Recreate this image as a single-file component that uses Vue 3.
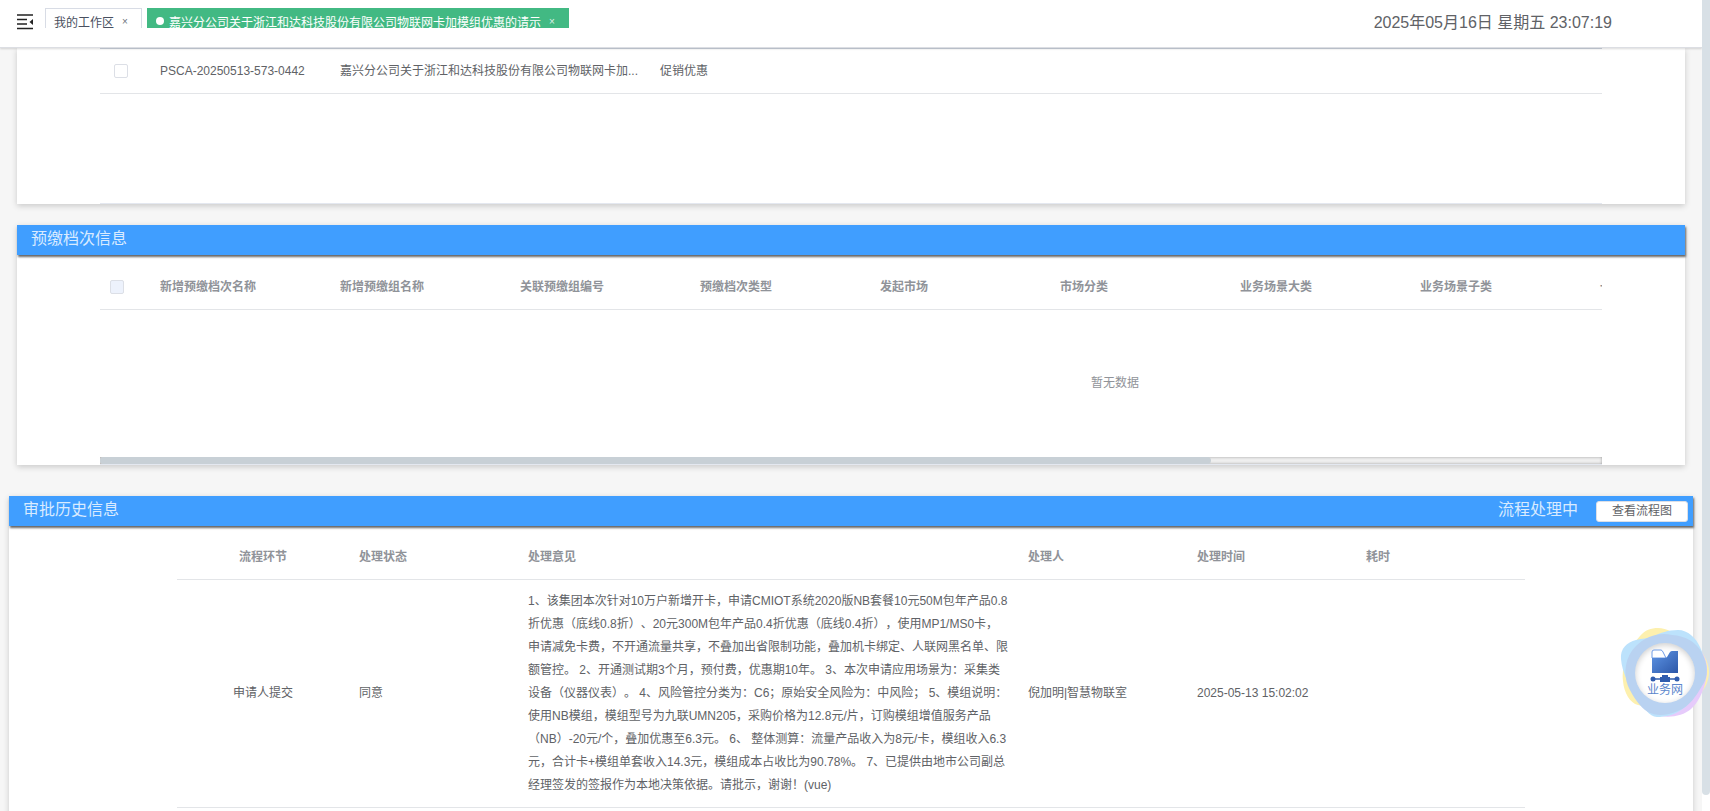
<script setup>
const clock = '2025年05月16日 星期五 23:07:19'

const tierColumns = [
  '新增预缴档次名称',
  '新增预缴组名称',
  '关联预缴组编号',
  '预缴档次类型',
  '发起市场',
  '市场分类',
  '业务场景大类',
  '业务场景子类',
  '一',
  '',
  ''
]

const opinion =
  '1、该集团本次针对10万户新增开卡，申请CMIOT系统2020版NB套餐10元50M包年产品0.8折优惠（底线0.8折）、20元300M包年产品0.4折优惠（底线0.4折），使用MP1/MS0卡，申请减免卡费，不开通流量共享，不叠加出省限制功能，叠加机卡绑定、人联网黑名单、限额管控。 2、开通测试期3个月，预付费，优惠期10年。 3、本次申请应用场景为：采集类设备（仪器仪表）。 4、风险管控分类为：C6；原始安全风险为：中风险； 5、模组说明：使用NB模组，模组型号为九联UMN205，采购价格为12.8元/片，订购模组增值服务产品（NB）-20元/个，叠加优惠至6.3元。 6、 整体测算：流量产品收入为8元/卡，模组收入6.3元，合计卡+模组单套收入14.3元，模组成本占收比为90.78%。 7、已提供由地市公司副总经理签发的签报作为本地决策依据。请批示，谢谢！(vue)'
</script>

<template>
  <div class="page">
    <header class="topbar">
      <button class="menu-toggle" type="button" aria-label="折叠菜单">
        <svg width="16" height="16" viewBox="0 0 16 16">
          <path d="M0 1h16M0 5.500h10M0 10h10M0 14.500h16" stroke="#222" stroke-width="1.500" fill="none" />
          <path d="M16 5v6l-3.500-3z" fill="#222" />
        </svg>
      </button>
      <nav class="tabs">
        <a class="tab" href="#">我的工作区<span class="close">×</span></a>
        <a class="tab active" href="#"><i class="dot"></i>嘉兴分公司关于浙江和达科技股份有限公司物联网卡加模组优惠的请示<span class="close">×</span></a>
      </nav>
      <time class="clock">{{ clock }}</time>
    </header>

    <main class="content">
      <section class="card first">
        <div class="table-box">
          <table class="grid apply">
            <colgroup><col class="c-check" /><col class="c-180" /><col class="c-320" /><col /></colgroup>
            <tbody>
              <tr>
                <td class="check shifted"><input type="checkbox" aria-label="选择此行" /></td>
                <td>PSCA-20250513-573-0442</td>
                <td>嘉兴分公司关于浙江和达科技股份有限公司物联网卡加...</td>
                <td>促销优惠</td>
              </tr>
            </tbody>
          </table>
        </div>
      </section>

      <section class="card tiers">
        <h2 class="bar"><span class="title">预缴档次信息</span></h2>
        <div class="table-box">
          <table class="grid wide">
            <colgroup><col class="c-check" /><col v-for="(c, i) in tierColumns" :key="i" class="c-180" /></colgroup>
            <thead>
              <tr>
                <th class="check"><input type="checkbox" class="muted" aria-label="全选" /></th>
                <th v-for="(c, i) in tierColumns" :key="i">{{ c }}</th>
              </tr>
            </thead>
            <tbody>
              <tr><td class="empty" :colspan="tierColumns.length + 1">暂无数据</td></tr>
            </tbody>
          </table>
          <div class="track"><div class="thumb"></div></div>
        </div>
      </section>

      <section class="card history">
        <h2 class="bar">
          <span class="title">审批历史信息</span>
          <span class="title status">流程处理中</span>
          <button type="button" class="flow-btn">查看流程图</button>
        </h2>
        <table class="grid steps">
          <colgroup>
            <col class="c-172" /><col class="c-169" /><col class="c-500" /><col class="c-169" /><col class="c-169" /><col class="c-169" />
          </colgroup>
          <thead>
            <tr>
              <th class="center">流程环节</th>
              <th>处理状态</th>
              <th>处理意见</th>
              <th>处理人</th>
              <th>处理时间</th>
              <th>耗时</th>
            </tr>
          </thead>
          <tbody>
            <tr>
              <td class="center">申请人提交</td>
              <td>同意</td>
              <td>{{ opinion }}</td>
              <td>倪加明|智慧物联室</td>
              <td>2025-05-13 15:02:02</td>
              <td></td>
            </tr>
          </tbody>
        </table>
      </section>
    </main>

    <div class="page-scroll"><div class="page-thumb"></div></div>

    <button class="float-btn" type="button">
      <svg class="blob" width="90" height="92" viewBox="0 0 90 92">
        <path d="M38 1C47 1 55 7 63 10C74 15 86 27 88 38C91 48 87 60 80 67L45 84L18 78C10 76 4 66 3 54C1 40 8 22 20 9C25 3 31 1 38 1Z" fill="#fdf0ae" />
        <path d="M70 14C79 18 86 29 87 40C88 55 80 74 71 82C62 90 45 92 34 87L30 50Z" fill="#e6cbfb" />
        <path d="M1 32C0 22 7 15 16 13C22 11 28 12 34 9C40 6 48 3 58 3C68 3 76 11 80 20C85 31 88 46 81 58C75 68 71 77 61 83C54 88 45 90 37 90C29 90 24 80 18 72C10 60 2 46 1 32Z" fill="#bce2fc" />
        <path d="M16 19C26 9 40 5 52 8C66 9 76 15 82 26C88 37 89 50 82 59C76 69 70 79 58 84C46 89 36 89 28 85C20 80 13 70 8 59C3 46 5 30 16 19Z" fill="#b9d2f1" />
      </svg>
      <span class="disc">
        <svg width="30" height="33" viewBox="0 0 30 33">
          <defs>
            <linearGradient id="folder" x1="0" y1="0" x2="1" y2="1">
              <stop offset="0" stop-color="#5f96e6" />
              <stop offset="1" stop-color="#2c57a8" />
            </linearGradient>
          </defs>
          <path d="M2 9V3q0-2 2-2h7q1 0 2 2l3 6z" fill="#fff" stroke="#6f9ce6" stroke-width="1" />
          <path d="M2 9h13q1 0 2-1l3-5q1-1 2-1h6v22H2z" fill="url(#folder)" />
          <path d="M3 30h24" stroke="#2f5cae" stroke-width="1.500" />
          <path d="M10 33v-5h2v-2h6v2h2v5z" fill="#2f5cae" />
          <circle cx="3" cy="30" r="2.500" fill="#2f5cae" />
          <circle cx="27" cy="30" r="2.500" fill="#2f5cae" />
        </svg>
        <span>业务网</span>
      </span>
    </button>
  </div>
</template>

<style>
body {
  background: #f6f6f6;
  overflow: hidden;
}
</style>

<style scoped>
.page {
  height: 100vh;
  overflow: hidden;
  position: relative;
  display: flex;
  flex-direction: column;
  padding-right: 8px;
  box-sizing: border-box;
  font-family: 'Liberation Sans', 'Noto Sans CJK SC', sans-serif;
  font-size: 12px;
  color: #606266;
  text-spacing-trim: space-all;
}
button {
  font-family: inherit;
  cursor: pointer;
}
.topbar {
  flex: none;
  height: 48px;
  background: #fff;
  display: flex;
  align-items: flex-start;
  box-shadow: 0 1px 2px rgba(0, 0, 0, 0.15);
  border-bottom: 1px solid #dcdee3;
  box-sizing: border-box;
  position: relative;
  z-index: 2;
}
.menu-toggle {
  border: 0;
  background: none;
  padding: 0;
  margin: 14px 12px 0 17px;
  height: 16px;
  width: 16px;
}
.menu-toggle svg {
  display: block;
}
.tabs {
  display: flex;
  gap: 5px;
  margin-top: 8px;
  height: 20px;
  overflow: hidden;
}
.tab {
  display: flex;
  align-items: center;
  height: 26px;
  box-sizing: border-box;
  padding: 0 8px;
  border: 1px solid #d8dce5;
  background: #fff;
  color: #495060;
  text-decoration: none;
}
.tab.active {
  background: #42b983;
  border-color: #42b983;
  color: #fff;
}
.dot {
  width: 8px;
  height: 8px;
  border-radius: 50%;
  background: #fff;
  margin-right: 5px;
}
.close {
  width: 16px;
  text-align: center;
  font-size: 10px;
  margin-left: 3px;
  opacity: 0.8;
}
.clock {
  margin: 11px 90px 0 auto;
  font-size: 16px;
  line-height: 24px;
}
.content {
  flex: 1;
  min-height: 0;
  overflow: hidden;
}
.card {
  background: #fff;
  box-shadow: 0 2px 6px rgba(0, 0, 0, 0.18);
  margin: 0 17px;
}
.table-box {
  margin: 0 83px;
  overflow: hidden;
  box-sizing: border-box;
}
.first .table-box {
  height: 156px;
  border-top: 1px solid #cdd3de;
  border-bottom: 1px solid #e4e8f0;
}
.grid {
  border-collapse: separate;
  border-spacing: 0;
  table-layout: fixed;
  width: 100%;
  line-height: 23px;
}
.grid th,
.grid td {
  padding: 10px;
  text-align: left;
  border-bottom: 1px solid #e3e5e8;
}
.grid.apply td,
.grid.wide th {
  padding-top: 11px;
}
.grid th {
  color: #909399;
  font-weight: 700;
}
.grid .center {
  text-align: center;
}
.grid .check.check {
  padding: 0 0 0 10px;
}
.grid .check.shifted {
  padding-left: 14px;
}
.c-check {
  width: 50px;
}
.c-180 {
  width: 180px;
}
.c-320 {
  width: 320px;
}
.c-172 {
  width: 172px;
}
.c-169 {
  width: 169px;
}
.c-500 {
  width: 500px;
}
input[type='checkbox'] {
  appearance: none;
  display: block;
  margin: 0;
  width: 14px;
  height: 14px;
  border: 1px solid #dcdfe6;
  border-radius: 2px;
  background: #fff;
}
input.muted {
  background: #edf2fc;
}
.tiers {
  margin-top: 21px;
}
.bar {
  margin: 0;
  height: 30px;
  box-sizing: border-box;
  padding: 0 5px 0 14px;
  background: #409eff;
  color: #d9ebff;
  font-size: 16px;
  font-weight: 400;
  display: flex;
  align-items: center;
  box-shadow: 1px 2px 2px #666;
}
.title {
  line-height: 22px;
  padding-bottom: 3px;
}
.tiers .table-box {
  padding-top: 10px;
}
.grid.wide {
  width: 2030px;
}
.grid .empty {
  height: 147px;
  padding: 0;
  text-align: center;
  border: 0;
  color: #909399;
}
.track {
  height: 8px;
  box-sizing: border-box;
  background: #efefef;
  box-shadow: inset 0 0 3px rgba(0, 0, 0, 0.35);
  border-bottom: 1px solid #e4e8f0;
}
.thumb {
  width: 74%;
  height: 7px;
  border-radius: 4px;
  background: #c8d0d6;
}
.history {
  margin: 31px 9px 0;
  padding-bottom: 20px;
}
.status {
  margin-left: auto;
  margin-right: 18px;
}
.flow-btn {
  width: 92px;
  height: 21px;
  padding: 0;
  border: 1px solid #dcdfe6;
  border-radius: 3px;
  background: #fff;
  color: #606266;
  font-size: 12px;
  line-height: 19px;
}
.steps {
  width: 80%;
  margin: 0 auto;
  padding-top: 10px;
}
.page-scroll {
  position: absolute;
  top: 0;
  right: 0;
  bottom: 0;
  width: 8px;
  background: #fff;
  z-index: 3;
}
.page-thumb {
  height: 98%;
  background: #d8e0e6;
  border-radius: 0 0 4px 4px;
}
.float-btn {
  position: absolute;
  right: 0;
  bottom: 92px;
  width: 90px;
  height: 92px;
  padding: 0;
  border: 0;
  background: none;
  z-index: 4;
}
.blob {
  position: absolute;
  left: 0;
  top: 0;
}
.disc {
  position: absolute;
  left: 15px;
  top: 16px;
  width: 60px;
  height: 60px;
  border-radius: 50%;
  background: #fff;
  box-shadow: inset 0 2px 6px rgba(0, 0, 0, 0.2);
  display: flex;
  flex-direction: column;
  align-items: center;
  padding-top: 6px;
  box-sizing: border-box;
  color: #5b86cc;
  font-size: 12px;
  line-height: 16px;
}
.disc svg {
  flex: none;
}
</style>
